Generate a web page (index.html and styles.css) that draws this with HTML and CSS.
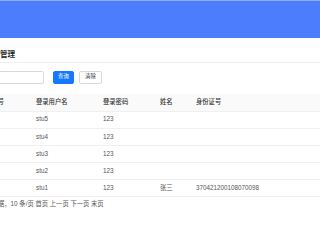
FILE: index.html
```html
<!DOCTYPE html>
<html lang="zh-CN">
<head>
<meta charset="utf-8">
<title>学生管理</title>
<link rel="stylesheet" href="styles.css">
</head>
<body>
<header class="topbar"></header>
<main class="page">
  <div class="title-bar"><h1 class="title">学生管理</h1></div>
  <form class="search">
    <input class="search-input" type="text">
    <button type="button" class="btn btn-primary">查询</button>
    <button type="button" class="btn btn-default">清除</button>
  </form>
  <div class="table">
    <div class="row head">
      <div class="cell c1">序号</div><div class="cell c2">登录用户名</div><div class="cell c3">登录密码</div><div class="cell c4">姓名</div><div class="cell c5">身份证号</div>
    </div>
    <div class="row">
      <div class="cell c1"></div><div class="cell c2">stu5</div><div class="cell c3">123</div><div class="cell c4"></div><div class="cell c5"></div>
    </div>
    <div class="row">
      <div class="cell c1"></div><div class="cell c2">stu4</div><div class="cell c3">123</div><div class="cell c4"></div><div class="cell c5"></div>
    </div>
    <div class="row">
      <div class="cell c1"></div><div class="cell c2">stu3</div><div class="cell c3">123</div><div class="cell c4"></div><div class="cell c5"></div>
    </div>
    <div class="row">
      <div class="cell c1"></div><div class="cell c2">stu2</div><div class="cell c3">123</div><div class="cell c4"></div><div class="cell c5"></div>
    </div>
    <div class="row">
      <div class="cell c1"></div><div class="cell c2">stu1</div><div class="cell c3">123</div><div class="cell c4">张三</div><div class="cell c5">370421200108070098</div>
    </div>
  </div>
  <div class="pager">共5条数据，10 条/页 首页 上一页 下一页 末页</div>
</main>
</body>
</html>
```

FILE: styles.css
```css
html, body {
  margin: 0;
  padding: 0;
  background: #ffffff;
  overflow: hidden;
}
body {
  width: 320px;
  height: 224px;
  font-family: "Liberation Sans", "Noto Sans CJK SC", sans-serif;
  color: #555555;
}
.topbar {
  height: 37px;
  background: #4b7dfd;
  border-top: 1px solid #8ea9f3;
}
.page {
  margin-left: -15.3px;
  width: calc(100% + 15.3px);
}
.title-bar {
  height: 25px;
  box-sizing: border-box;
  border-bottom: 1px solid #f0f0f0;
  padding-top: 13px;
}
.title {
  margin: 0;
  font-size: 7.6px;
  line-height: 8px;
  font-weight: 700;
  color: #1f1f1f;
}
.search {
  display: flex;
  align-items: center;
  margin: 7.5px 0 0 0;
  height: 13px;
}
.search-input {
  box-sizing: border-box;
  width: 59.3px;
  height: 13px;
  margin: 0;
  padding: 0 3px;
  border: 1px solid #d9d9d9;
  border-radius: 2px;
  background: #ffffff;
  outline: none;
}
.btn {
  box-sizing: border-box;
  height: 13px;
  margin: 0;
  padding: 0;
  border-radius: 2px;
  font-family: "Liberation Sans", "Noto Sans CJK SC", sans-serif;
  font-size: 5.4px;
  line-height: 1;
  display: flex;
  align-items: center;
  justify-content: center;
}
.btn-primary {
  width: 21px;
  margin-left: 9px;
  background: #1677ff;
  border: 1px solid #1677ff;
  color: #ffffff;
}
.btn-default {
  width: 23px;
  margin-left: 5px;
  background: #ffffff;
  border: 1px solid #d9d9d9;
  color: #333333;
}
.table {
  margin-top: 10px;
  display: flex;
  flex-direction: column;
}
.row {
  display: grid;
  grid-template-columns: 44.6px 67px 57px 36px 1fr;
  height: 17.2px;
  box-sizing: border-box;
  border-bottom: 1px solid #f0f0f0;
  align-items: center;
  font-size: 6.3px;
}
.row.head {
  height: 18px;
  background: #fafafa;
  color: #333333;
  font-weight: 500;
}
.cell {
  padding-left: 6.7px;
  white-space: nowrap;
  line-height: 1;
}
.pager {
  margin-top: 3px;
  margin-left: -9.1px;
  font-size: 6.3px;
  line-height: 8px;
  color: #555555;
  white-space: nowrap;
}
```
